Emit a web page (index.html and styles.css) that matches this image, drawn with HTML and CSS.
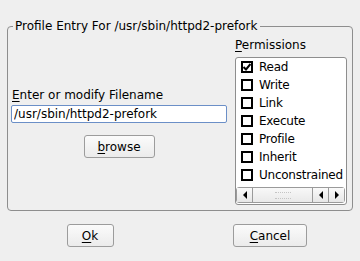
FILE: index.html
```html
<!DOCTYPE html>
<html lang="en">
<head>
    <meta charset="UTF-8">
    <title>Profile Entry</title>
    <link rel="stylesheet" href="styles.css">
</head>
<body>
    <div class="dialog">
        <fieldset class="group">
            <legend>Profile Entry For /usr/sbin/httpd2-prefork</legend>
            <div class="content">
                <div class="file-col">
                    <label class="label"><u>E</u>nter or modify Filename</label>
                    <input class="filename" type="text" value="/usr/sbin/httpd2-prefork">
                    <button class="btn btn-browse"><u>b</u>rowse</button>
                </div>
                <div class="perm-col">
                    <div class="label"><u>P</u>ermissions</div>
                    <div class="listbox">
                        <ul class="perm-list">
                            <li><span class="check checked"><svg width="8" height="8" viewBox="0 0 8 8"><polyline points="0.5,4 3,6.5 7.5,1" fill="none" stroke="#000" stroke-width="2"/></svg></span>Read</li>
                            <li><span class="check"></span>Write</li>
                            <li><span class="check"></span>Link</li>
                            <li><span class="check"></span>Execute</li>
                            <li><span class="check"></span>Profile</li>
                            <li><span class="check"></span>Inherit</li>
                            <li><span class="check"></span>Unconstrained</li>
                        </ul>
                        <div class="scrollbar">
                            <span class="sb-btn"><i class="arrow-left"></i></span>
                            <span class="sb-thumb"><i class="grip"></i></span>
                            <span class="sb-btn"><i class="arrow-left"></i></span>
                            <span class="sb-btn"><i class="arrow-right"></i></span>
                        </div>
                    </div>
                </div>
            </div>
        </fieldset>
    </div>
    <div class="actions">
        <div class="cell"><button class="btn btn-ok"><u>O</u>k</button></div>
        <div class="cell"><button class="btn btn-cancel"><u>C</u>ancel</button></div>
    </div>
</body>
</html>
```
FILE: styles.css
```css
body {
    margin: 0;
    background-color: #efefef;
    font-family: "DejaVu Sans", sans-serif;
    font-size: 12px;
    color: #000;
}

u {
    text-decoration: underline;
    text-underline-offset: 2px;
}

.dialog {
    padding: 19px 7px 0;
}

.group {
    margin: 0;
    border: 1px solid #8e8e8e;
    border-radius: 4px;
    padding: 0 5px 5px 3px;
}

.group legend {
    margin-left: 2px;
    padding: 0 2px;
    line-height: 14px;
}

.content {
    display: flex;
    align-items: center;
    gap: 8px;
}

.label {
    display: block;
    line-height: 14px;
}

.file-col {
    width: 216px;
    display: flex;
    flex-direction: column;
    align-items: center;
    margin-top: 8px;
}

.file-col .label {
    align-self: flex-start;
    padding-left: 1px;
}

.filename {
    box-sizing: border-box;
    width: 216px;
    height: 18px;
    margin: 3px 0 0;
    padding: 0 2px;
    border: 1px solid #6b8fc7;
    border-radius: 2px;
    font-family: "DejaVu Sans", sans-serif;
    font-size: 12px;
    color: #000;
    background: #fff;
    outline: none;
}

.btn {
    box-sizing: border-box;
    height: 23px;
    padding: 0;
    border: 1px solid #9c9c9c;
    border-radius: 3px;
    background: linear-gradient(#fbfbfb, #ebebeb);
    font-family: "DejaVu Sans", sans-serif;
    font-size: 12px;
    color: #000;
}

.btn-browse {
    width: 71px;
    margin-top: 12px;
}

.perm-col {
    width: 112px;
    padding-top: 5px;
}

.perm-col .label {
    margin-bottom: 5px;
}

.listbox {
    box-sizing: border-box;
    height: 148px;
    border: 1px solid #8e8e8e;
    border-radius: 3px;
    background: #fff;
    overflow: hidden;
}

.perm-list {
    list-style: none;
    margin: 0;
    padding: 0;
    height: 126px;
    letter-spacing: -0.25px;
}

.perm-list li {
    display: flex;
    align-items: center;
    height: 18px;
    padding-left: 5px;
    white-space: nowrap;
}

.check {
    box-sizing: border-box;
    flex: none;
    width: 12px;
    height: 12px;
    border: 2px solid #000;
    margin-right: 6px;
    display: flex;
    align-items: center;
    justify-content: center;
}

.scrollbar {
    display: flex;
    box-sizing: border-box;
    height: 16px;
    margin: 3px 1px 0 0;
    border: 1px solid #9a9a9a;
    border-radius: 3px;
    background: #f2f2f2;
}

.sb-btn {
    width: 15px;
    display: flex;
    align-items: center;
    justify-content: center;
    border-right: 1px solid #9a9a9a;
    background: linear-gradient(#fafafa, #e6e6e6);
}

.sb-btn:last-child {
    border-right: none;
}

.sb-thumb {
    flex: 1;
    display: flex;
    align-items: center;
    justify-content: center;
    border-right: 1px solid #9a9a9a;
    background: linear-gradient(#f8f8f8, #e9e9e9);
}

.grip {
    width: 16px;
    height: 5px;
    border-top: 1px dotted #c4c4c4;
    border-bottom: 1px dotted #c4c4c4;
}

.arrow-left {
    width: 0;
    height: 0;
    border-top: 4px solid transparent;
    border-bottom: 4px solid transparent;
    border-right: 4px solid #000;
}

.arrow-right {
    width: 0;
    height: 0;
    border-top: 4px solid transparent;
    border-bottom: 4px solid transparent;
    border-left: 4px solid #000;
}

.actions {
    display: grid;
    grid-template-columns: 1fr 1fr;
    margin-top: 13px;
}

.cell {
    display: flex;
    justify-content: center;
}

.btn-ok {
    width: 47px;
}

.btn-cancel {
    width: 74px;
}
```
